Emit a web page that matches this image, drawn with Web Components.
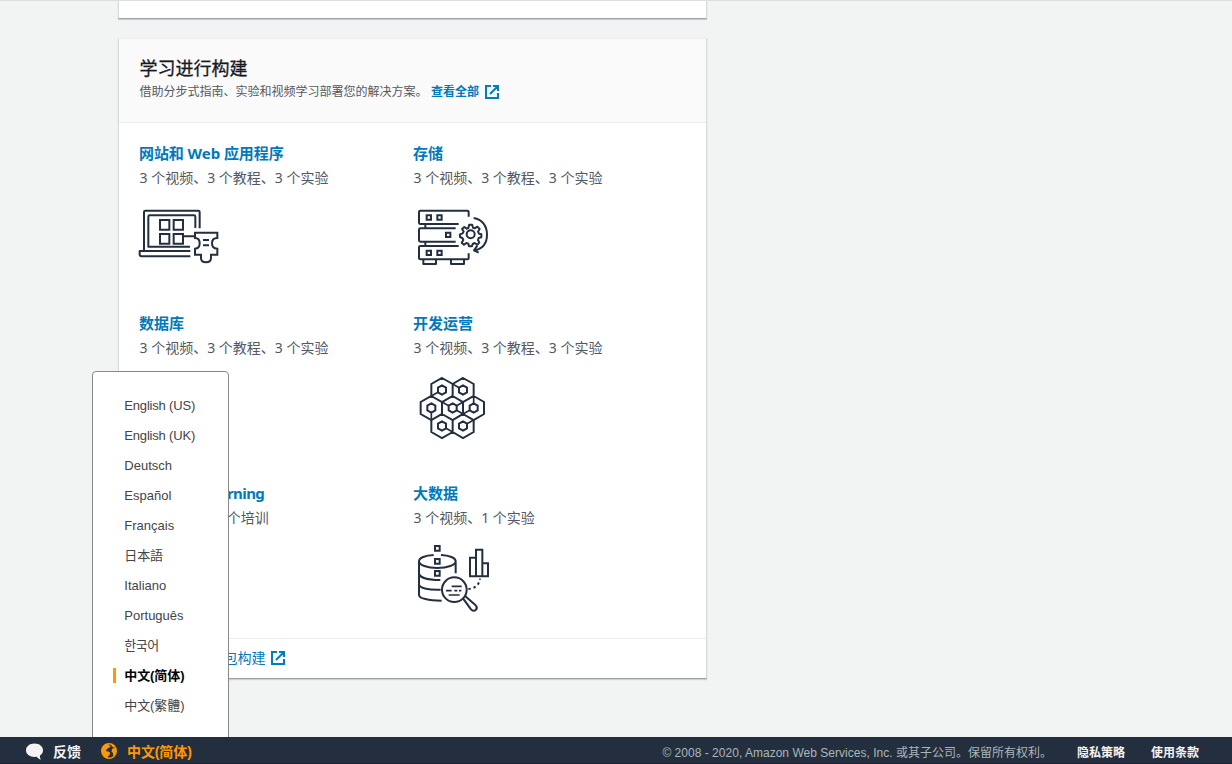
<!DOCTYPE html>
<html lang="zh-CN">
<head>
<meta charset="utf-8">
<title>AWS</title>
<style>
html,body{margin:0;height:100%}
body{overflow:hidden;background:#f2f3f3;color:#54585d;font-family:"Noto Sans","Noto Sans CJK SC",sans-serif}
</style>
</head>
<body>
<aws-console></aws-console>
<script>
const define = (name, html) => {
  const t = document.createElement('template');
  t.innerHTML = html;
  customElements.define(name, class extends HTMLElement {
    constructor() {
      super();
      this.attachShadow({mode: 'open'}).appendChild(t.content.cloneNode(true));
    }
  });
};

define('external-icon', `<style>:host{display:inline-block;width:14px;height:14px}svg{display:block}</style>
<svg width="14" height="14" viewBox="0 0 14 14" fill="none" stroke="#007dbc" stroke-width="2"><path d="M6 1H1v12h12V8M8 1h5v5M13 1 5 9"/></svg>`);

define('console-card', `<style>
:host{display:block;box-sizing:border-box;width:589px;background:#fff;border:1px solid #d5dbdb;border-top-color:#eaeded;border-bottom-color:#98a3a6;box-shadow:0 1px 1px rgba(0,28,36,.16)}
</style><slot name="header"></slot><slot></slot><slot name="footer"></slot>`);

define('card-header', `<style>
:host{display:block;box-sizing:border-box;height:84px;padding:17px 20px 0 20.5px;background:#fafafa;border-bottom:1px solid #eaeded}
h2{margin:0 0 2px;font-size:18px;line-height:23px;height:23px;font-weight:400;-webkit-text-stroke:.3px #16191f;color:#16191f;font-family:"Noto Sans CJK SC",sans-serif}
p{margin:0;font-size:12px;line-height:22px;display:flex;align-items:center}
b{font-weight:700;color:#0079bb;margin:0 6px 0 3.500px}
</style><h2><slot name="title"></slot></h2><p><slot></slot><b><slot name="link"></slot></b><external-icon></external-icon></p>`);

define('topic-grid', `<style>
:host{display:grid;grid-template-columns:274px 273px;grid-auto-rows:170px;padding:20px 20px 0;height:515px;box-sizing:border-box}
</style><slot></slot>`);

define('topic-item', `<style>
:host{display:block}
h3{margin:-1px 0 0;font-size:15px;line-height:22px;height:22px;font-weight:700;color:#0079bb;white-space:pre;letter-spacing:var(--track,0)}
p{margin:3px 0 11px .5px;font-size:14px;line-height:22px;height:22px;white-space:pre}
::slotted(svg){display:block;width:91px;height:75px;overflow:visible;fill:none;stroke:#232f3e;stroke-width:6;stroke-linejoin:round}
</style><h3><slot name="title"></slot></h3><p><slot name="info"></slot></p><slot></slot>`);

define('card-footer', `<style>
:host{display:flex;align-items:center;height:40px;padding:0 20px 2px;border-top:1px solid #eaeded;color:#0079bb;font-size:14px;gap:6px;box-sizing:border-box}
span{position:relative;top:-1px;left:.5px}
</style><span><slot></slot></span><external-icon></external-icon>`);

define('language-option', `<style>
:host{display:flex;align-items:center;height:30px;padding-left:20px;color:#444;font:13px/30px "Liberation Sans","Noto Sans CJK SC","Noto Sans CJK KR",sans-serif}
i{width:3px;height:15px;margin-right:8.3px}
span{letter-spacing:var(--track,-.1px)}
:host([selected]){color:#000;font-weight:700}
:host([selected]) i{background:#f90;margin-top:-2px}
</style><i></i><span><slot></slot></span>`);

define('language-menu', `<style>
:host{position:absolute;z-index:1;left:92px;top:370px;width:137px;height:380px;box-sizing:border-box;padding-top:19px;background:#fff;border:1px solid #888;border-radius:4px}
</style>
<language-option style="--track:-.18px">English (US)</language-option>
<language-option style="--track:-.18px">English (UK)</language-option>
<language-option style="--track:0px">Deutsch</language-option>
<language-option style="--track:0px">Español</language-option>
<language-option style="--track:0px">Français</language-option>
<language-option>日本語</language-option>
<language-option style="--track:0px">Italiano</language-option>
<language-option style="--track:0px">Português</language-option>
<language-option style="--track:-.5px">한국어</language-option>
<language-option selected>中文(简体)</language-option>
<language-option>中文(繁體)</language-option>`);

define('console-footer', `<style>
:host{position:absolute;z-index:2;left:0;right:0;bottom:0;height:27px;box-sizing:border-box;padding:2px 33px 0 25px;background:#232f3e;border-bottom:1px solid #1b2033;display:flex;align-items:center;color:#fff;white-space:pre;font-family:"Liberation Sans","Noto Sans CJK SC",sans-serif}
b{font-size:14px;color:#f3f3f3}
.bubble{margin-right:9px}.globe{margin:0 10px 0 20px}
.lang{color:#f90;letter-spacing:-.1px}
.right{margin-left:auto;display:flex;font-size:12px;align-items:center}
.copy{color:#aab7b8;margin-right:25px}
.en{letter-spacing:.02px}
.right b{font-size:12px}.right b+b{margin-left:26px}
</style>
<svg class="bubble" width="19" height="17" viewBox="0 0 19 17"><path fill="#f3f3f3" d="M9.500.5C4.600.5 1 3.400 1 7.200s3.600 6.700 8.500 6.700l2.300-.2c.9 1.500 2.400 2.500 4.100 2.700-.9-1-1.100-2.600-.9-3.900 1.900-1.200 3-3 3-5.300C18 3.400 14.400.5 9.500.5Z"/></svg>
<b>反馈</b>
<svg class="globe" width="16" height="16" viewBox="0 0 16 16"><circle cx="8" cy="8" r="8" fill="#232f3e"/><circle cx="8" cy="8" r="7.300" fill="none" stroke="#f90" stroke-width="1.400"/><path fill="#f90" d="M1.500 4 4 1.500 7 .8l1 1.700 1.700.3-1 1.700-1.700.6-1.100 1.500-1 .5.5 1.200 2.300.3 1.500 1.500-.7 2-1.500 1.200-.3 2-3-1.300L1 10 .8 6.500ZM10 1l2.500.8 1.700 2-1.500.7-1.700-1ZM11 6l1.800-1 2 .6.400 3.400-1.700 3.500-1.400.2-.1-2.700-1.500-1.500Z" /></svg>
<b class="lang">中文(简体)</b>
<div class="right"><span class="copy"><span class="en">© 2008 - 2020, Amazon Web Services, Inc. </span>或其子公司。保留所有权利。</span><b>隐私策略</b><b>使用条款</b></div>`);

define('aws-console', `<style>
:host{display:block;position:relative;box-sizing:border-box;height:764px;padding-left:118px;border-top:1px solid #dcdfdf;overflow:hidden;background:#f2f3f3}
.previous{height:19px;border-top:0;margin-top:-1px;margin-bottom:19px}
.previous{position:relative;z-index:0;clip-path:inset(1px -2px -3px -2px)}
</style>
<console-card class="previous"></console-card>
<console-card>
<card-header slot="header"><span slot="title">学习进行构建</span>借助分步式指南、实验和视频学习部署您的解决方案。<span slot="link">查看全部</span></card-header>
<topic-grid>
<topic-item style="--track:-.07px"><span slot="title">网站和 Web 应用程序</span><span slot="info">3 个视频、3 个教程、3 个实验</span>
<svg viewBox="27 0 273 225"><path d="M42 152V36q0-4 4-4h159q4 0 4 4v49M180 140H55V50q0-4 4-4h133q4 0 4 4v34M181 153H29v10q0 6 6 6h146M160 109h35"/><path stroke-linejoin="miter" d="M90 60h28v29H90zM131 60h28v29h-28zM90 102h28v29H90zM131 102h28v29h-28zM195 98h67v16q-16 0-16 16t16 16v18h-19v10q0 13-15 13t-15-13v-10h-18v-18q14 0 14-16t-14-16zM219 120h18M219 136h18"/></svg></topic-item>
<topic-item><span slot="title">存储</span><span slot="info">3 个视频、3 个教程、3 个实验</span>
<svg viewBox="24 0 273 225"><path d="M191 50V36q0-4-4-4H46q-4 0-4 4v32q0 4 4 4h115M152 85H46q-4 0-4 4v32q0 4 4 4h106M161 138H46q-4 0-4 4v32q0 4 4 4h141q4 0 4-4v-14M61 72v13M61 125v13M55 179v13h38v-13M138 179v13h39v-13"/><path stroke-linejoin="miter" d="M65 46h13v13H65zM97 46h13v13H97zM123 98h13v13h-13zM65 152h13v13H65zM97 152h13v13H97z"/><path d="m192.500 74 9 0 2.500 9 5 2 8-5 7 7-5 8 3 6 7 2v9l-8 2-2 6 4 8-6 6-8-5-6 3-2 7h-9l-2-8-6-2-7 5-7-6 5-8-3-6-7-3v-8l8-3 3-6-5-7 7-6 7 5 5-2z"/><circle cx="197" cy="103" r="12"/><path d="M206 54c26 4 40 25 40 50 0 27-15 42-37 47M217 137l-10 14 14 7"/></svg></topic-item>
<topic-item><span slot="title">数据库</span><span slot="info">3 个视频、3 个教程、3 个实验</span></topic-item>
<topic-item><span slot="title">开发运营</span><span slot="info">3 个视频、3 个教程、3 个实验</span>
<svg viewBox="24 0 273 225" style="stroke-linejoin:miter"><path d="M111 24 143 42v36L111 96 79 78V42zM174 24l32 18v36l-32 18-31-18V42zM79 78l32 18v36l-32 18-32-18V96zM143 78l31 18v36l-31 18-32-18V96zM206 78l31 18v36l-31 18-32-18V96zM111 132l32 18v36l-32 18-32-18v-36zM174 132l32 18v36l-32 18-31-18v-36z"/><path d="m111 46 12 7v14l-12 7-12-7V53zM174 46l12 7v14l-12 7-12-7V53zM79 100l12 7v14l-12 7-12-7v-14zM143 100l12 7v14l-12 7-12-7v-14zM206 100l12 7v14l-12 7-12-7v-14zM111 154l12 7v14l-12 7-12-7v-14zM174 154l12 7v14l-12 7-12-7v-14z"/><path stroke-width="5" d="M99 67 79 78M143 42l19 11M206 78v22M111 96l20 11M174 96l-19 11M155 121l19 11M174 132l20-11M79 128v22M123 175l20 11M186 161l20-11"/></svg></topic-item>
<topic-item style="--track:-.56px"><span slot="title">Machine Learning</span><span slot="info">10 个视频、5 个培训</span></topic-item>
<topic-item><span slot="title">大数据</span><span slot="info">3 个视频、1 个实验</span>
<svg viewBox="24 5 273 225"><path d="M86 50c-25 1-44 9-44 19 0 11 24 20 55 20s55-9 55-20c0-10-19-18-44-19M42 69v101c0 10 28 17 68 17M152 69v36M42 104c0 13 25 21 64 21M42 138c0 11 26 17 65 16"/><path stroke-linejoin="miter" d="M90 23h14v14H90zM90 62h14v14H90zM90 98h14v14H90zM195 58h18v56h-18zM213 34h19v80h-19zM232 75h17v39h-17z"/><circle cx="148" cy="154" r="37"/><path stroke-width="5" d="M140 144h30M123 157h17M148 157h9M162 157h7M131 170h33"/><path d="m174 180 24 33c10 11 23-2 14-12l-31-27"/><path stroke-dasharray="7 9" d="M190 152q31-3 35-31"/></svg></topic-item>
</topic-grid>
<card-footer slot="footer">使用解决方案包构建</card-footer>
</console-card>
<language-menu></language-menu>
<console-footer></console-footer>`);
</script>
</body>
</html>
